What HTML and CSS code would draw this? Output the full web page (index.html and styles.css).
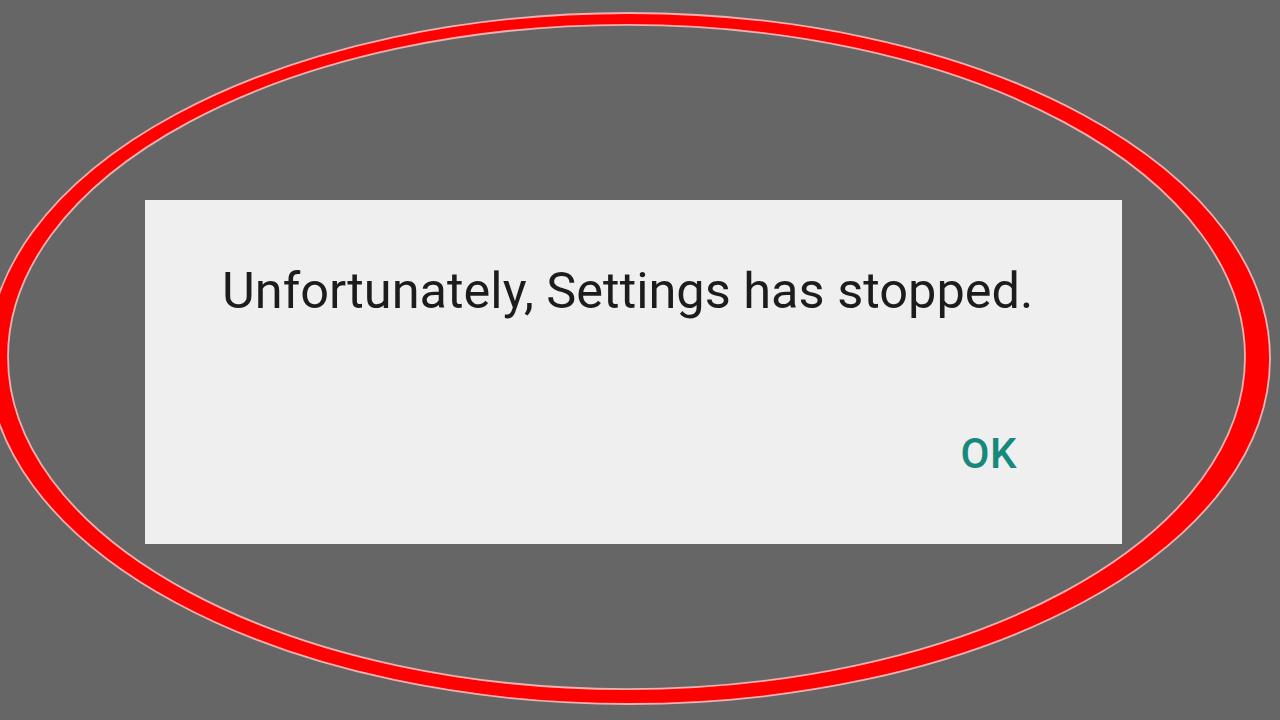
FILE: index.html
```html
<!DOCTYPE html>
<html>
<head>
<meta charset="utf-8">
<link rel="stylesheet" href="styles.css">
</head>
<body>
<div class="stage">
  <div class="dialog">
    <div class="message">Unfortunately, Settings has stopped.</div>
    <div class="actions"><span class="ok">OK</span></div>
  </div>
  <svg class="ring" width="1280" height="720" viewBox="0 0 1280 720">
    <path d="M -12 358.5 A 641 345.5 0 1 0 1270 358.5 A 641 345.5 0 1 0 -12 358.5 Z M 8 357 A 618.5 332 0 1 1 1245 357 A 618.5 332 0 1 1 8 357 Z" fill="#fe0000" fill-rule="evenodd" stroke="#f2b0b0" stroke-width="1.8"/>
  </svg>
</div>
</body>
</html>
```
FILE: styles.css
```css
html, body {
  margin: 0;
  padding: 0;
  background: #666666;
}
.stage {
  position: relative;
  width: 1280px;
  height: 720px;
  overflow: hidden;
  padding-top: 200px;
  box-sizing: border-box;
}
.dialog {
  margin-left: 145px;
  width: 977px;
  height: 344px;
  background: #efefef;
  box-sizing: border-box;
  padding-top: 66px;
  display: flex;
  flex-direction: column;
  font-family: Roboto, "Noto Sans", sans-serif;
}
.message {
  padding-left: 77px;
  font-size: 50.5px;
  line-height: 1;
  color: #1c1c1c;
  white-space: nowrap;
}
.actions {
  margin-top: 116px;
  display: flex;
  justify-content: flex-end;
  padding-right: 105px;
}
.ok {
  font-size: 42px;
  line-height: 1;
  font-weight: 500;
  color: #16897e;
  letter-spacing: 0.5px;
}
.ring {
  position: absolute;
  left: 0;
  top: 0;
}
```
